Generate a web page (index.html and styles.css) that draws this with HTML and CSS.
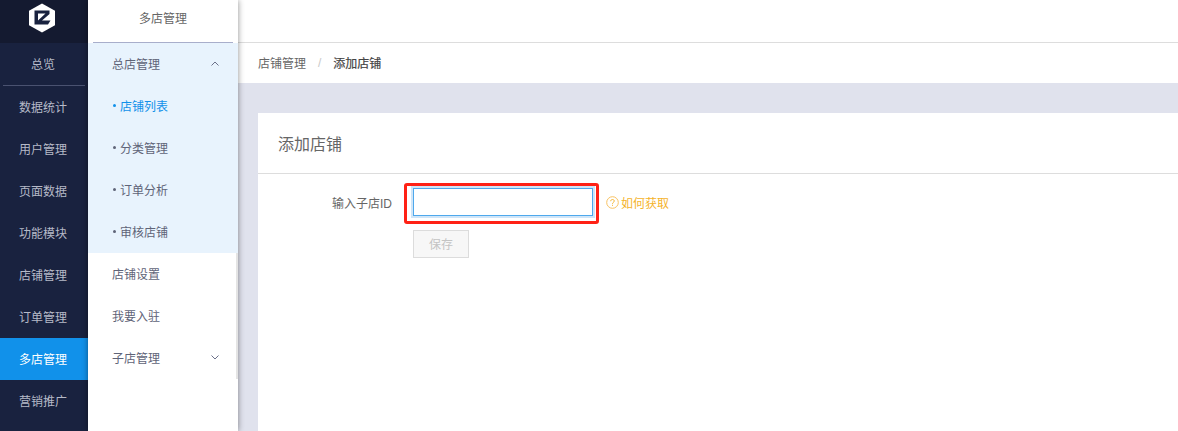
FILE: index.html
```html
<!DOCTYPE html>
<html lang="zh-CN">
<head>
<meta charset="utf-8">
<title>添加店铺</title>
<link rel="stylesheet" href="styles.css">
</head>
<body>
<div class="app">
  <nav class="rail">
    <div class="logo">
      <svg width="28" height="30" viewBox="0 0 28 30"><path d="M14 0.500 27 7.700V22.300L14 29.500 1 22.300V7.700Z" fill="#fff"/><path d="M6.500 7.500H21.500V11L14 17.500H22.500L20 21.500H6.500ZM10 10.500V17.500L17.500 10.500Z" fill="#19223f" fill-rule="evenodd"/></svg>
    </div>
    <a class="rail-item rail-first">总览</a>
    <a class="rail-item">数据统计</a>
    <a class="rail-item">用户管理</a>
    <a class="rail-item">页面数据</a>
    <a class="rail-item">功能模块</a>
    <a class="rail-item">店铺管理</a>
    <a class="rail-item">订单管理</a>
    <a class="rail-item rail-active">多店管理</a>
    <a class="rail-item">营销推广</a>
  </nav>
  <aside class="sub">
    <div class="sub-title"><span>多店管理</span></div>
    <div class="sub-open">
      <div class="sub-row"><span>总店管理</span>
        <svg class="chev" width="8" height="5" viewBox="0 0 8 5"><path d="M.5 4.500 4 1l3.500 3.500" fill="none" stroke="#6b7089"/></svg>
      </div>
      <div class="sub-row sub-child sub-current"><i class="dot"></i>店铺列表</div>
      <div class="sub-row sub-child"><i class="dot"></i>分类管理</div>
      <div class="sub-row sub-child"><i class="dot"></i>订单分析</div>
      <div class="sub-row sub-child"><i class="dot"></i>审核店铺</div>
    </div>
    <div class="sub-row">店铺设置</div>
    <div class="sub-row">我要入驻</div>
    <div class="sub-row"><span>子店管理</span>
      <svg class="chev" width="8" height="5" viewBox="0 0 8 5"><path d="M.5.500 4 4 7.500.500" fill="none" stroke="#6b7089"/></svg>
    </div>
    <div class="sub-thumb"></div>
  </aside>
  <main class="main">
    <div class="topbar"></div>
    <div class="crumbs"><span>店铺管理</span><span class="sep">/</span><b>添加店铺</b></div>
    <div class="content">
      <section class="card">
        <h1 class="card-title">添加店铺</h1>
        <form class="form">
          <div class="field">
            <label class="field-label">输入子店ID</label>
            <div class="mark"><input class="input" type="text"></div>
            <a class="help">
              <svg width="13" height="13" viewBox="0 0 13 13"><circle cx="6.500" cy="6.500" r="5.800" fill="none" stroke="#f8c262"/><path d="M4.700 5.200C4.700 4.100 5.500 3.500 6.500 3.500S8.300 4.200 8.300 5.100C8.300 6.200 6.500 6.300 6.500 7.800" fill="none" stroke="#f5b32b"/><rect x="6" y="8.800" width="1" height="1" fill="#f5b32b"/></svg>
              如何获取
            </a>
          </div>
          <button class="save" type="button" disabled>保存</button>
        </form>
      </section>
    </div>
  </main>
</div>
</body>
</html>
```
FILE: styles.css
```css
* { box-sizing: border-box; }
html, body { margin: 0; height: 100%; overflow: hidden; }
body {
  font-family: "Liberation Sans", "Noto Sans CJK SC", sans-serif;
  font-size: 12px;
  color: #5f6478;
  background: #fff;
}
.app { display: flex; height: 431px; }

.rail { width: 88px; flex: none; background: #19223f; position: relative; z-index: 1; }
.logo { height: 43px; background: #141a30; display: flex; align-items: center; justify-content: center; padding: 0 5px 7px 0; }
.rail-item { display: flex; align-items: center; justify-content: center; height: 42px; padding: 0 2px 2px 0; color: #b6bac8; }
.rail-first { height: 43px; position: relative; }
.rail-first::after { content: ""; position: absolute; left: 3px; right: 3px; bottom: 0; height: 1px; background: #4a5270; }
.rail-active { background: #1191ea; color: #fff; }

.sub { width: 150px; flex: none; background: #fff; box-shadow: 0 0 6px rgba(0, 0, 0, .45); position: relative; z-index: 2; }
.sub-title { height: 43px; padding: 0 5px; }
.sub-title span { display: flex; height: 43px; padding-bottom: 7px; align-items: center; justify-content: center; border-bottom: 1px solid #a8aecb; color: #666; }
.sub-open { background: #e8f3fd; }
.sub-row { height: 42px; padding: 0 19px 2px 24px; display: flex; align-items: center; justify-content: space-between; color: #5f6478; }
.sub-child { justify-content: flex-start; padding-left: 25px; }
.sub-current { color: #1191ea; }
.dot { width: 3px; height: 3px; border-radius: 50%; background: currentColor; margin-right: 4px; }
.sub-thumb { position: absolute; right: 0; top: 253px; width: 2px; height: 126px; background: #e4e4e4; }

.main { flex: 1; min-width: 0; display: flex; flex-direction: column; }
.topbar { height: 43px; flex: none; border-bottom: 1px solid #dddddd; }
.crumbs { height: 40px; flex: none; display: flex; align-items: center; padding: 0 0 1px 20px; color: #666; }
.crumbs b { font-weight: 400; color: #444; -webkit-text-stroke: .2px #444; }
.sep { margin: 0 12px; color: #c8c8c8; }
.content { flex: 1; background: #e0e2ed; padding: 30px 0 0 20px; }
.card { background: #fff; height: 100%; }
.card-title { margin: 0; height: 61px; padding-left: 20px; display: flex; align-items: center; font-size: 16px; font-weight: 400; color: #666; border-bottom: 1px solid #dddddd; }
.form { padding-left: 155px; }
.field { display: flex; align-items: center; height: 41px; margin-top: 9px; margin-left: -155px; }
.field-label { width: 134px; padding-bottom: 2px; text-align: right; color: #666; }
.mark { margin-left: 12px; width: 195px; height: 41px; border: 3px solid #ff2115; border-radius: 3px; padding: 2px 6px; }
.input { display: block; width: 180px; height: 28px; border: 1px solid #4ea8ec; outline: 2px solid #cfe5f8; outline-offset: 0; background: #fff; padding: 0; }
.help { display: flex; align-items: center; gap: 2px; margin-left: 7px; padding-bottom: 2px; color: #f5b32b; }
.save { display: block; margin: 6px 0 0; width: 56px; height: 28px; padding: 0 0 2px; border: 1px solid #dcdcdc; background: #f7f7f7; color: #c4c4c4; font: inherit; }
```
